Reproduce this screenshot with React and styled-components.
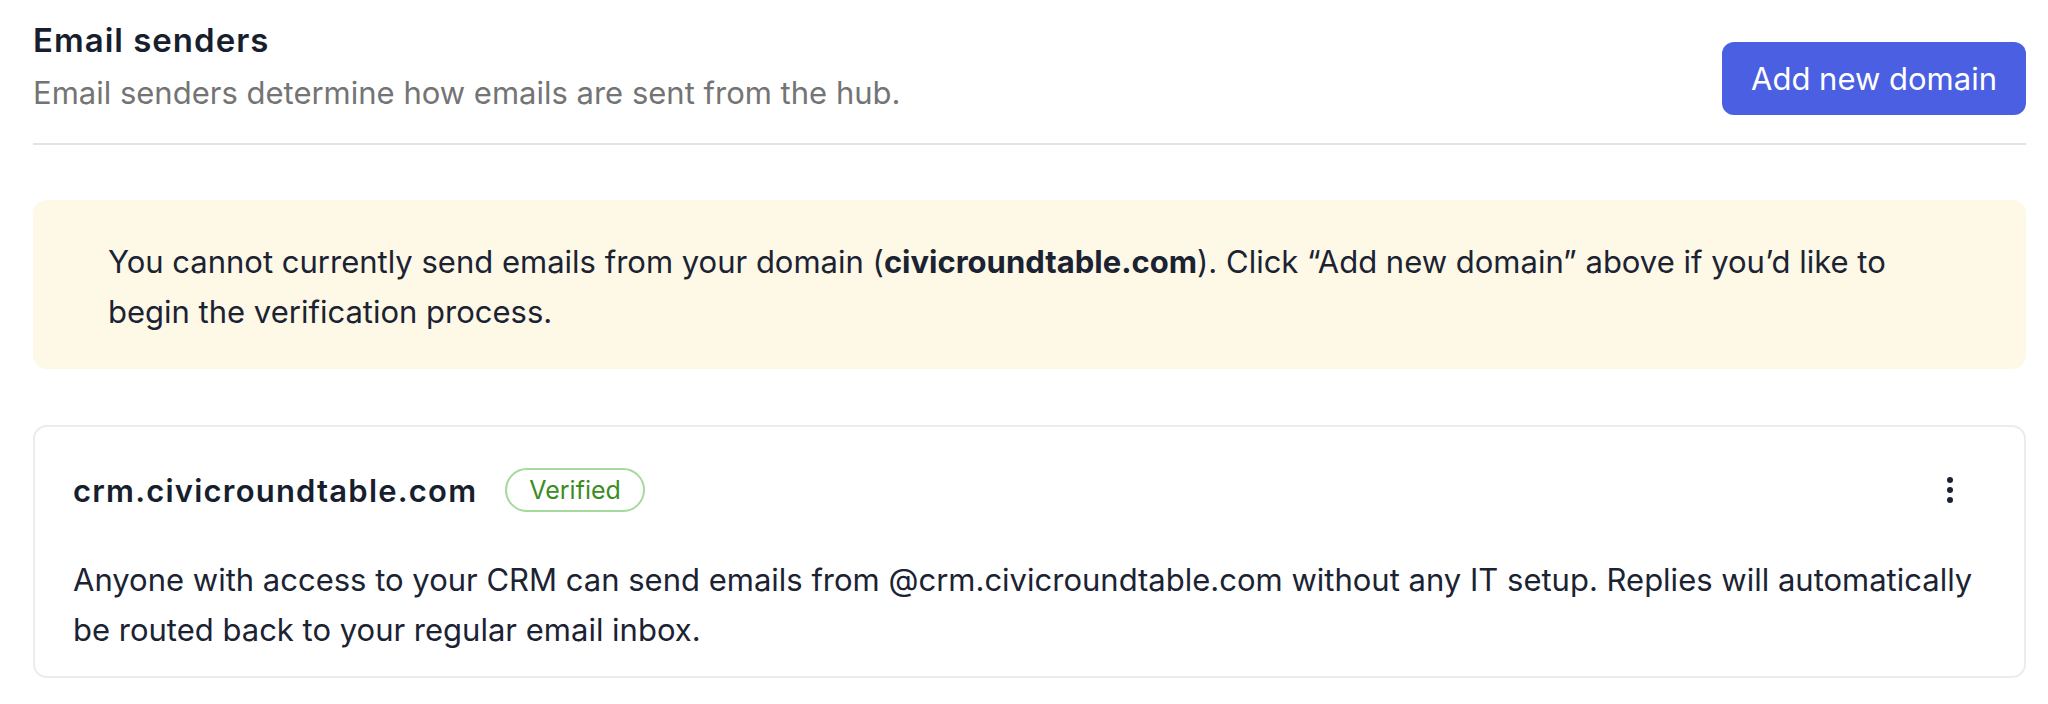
import React from 'react';
import styled, { createGlobalStyle } from 'styled-components';

const GlobalStyle = createGlobalStyle`
  body {
    margin: 0;
    background: #ffffff;
    font-family: Inter, "Noto Sans", "Liberation Sans", sans-serif;
    color: #1b2333;
  }
`;

const Page = styled.div`
  padding: 18px 22px 0 33px;
`;

const Header = styled.div`
  display: flex;
  align-items: flex-end;
  justify-content: space-between;
  padding-bottom: 28px;
  border-bottom: 2px solid #e3e3e3;
`;

const Title = styled.h2`
  margin: 0;
  font-size: 33px;
  line-height: 45px;
  font-weight: 600;
  letter-spacing: 1px;
  color: #171f2e;
`;

const Subtitle = styled.p`
  margin: 7px 0 0;
  font-size: 31px;
  line-height: 45px;
  color: #747474;
`;

const PrimaryButton = styled.button`
  height: 73px;
  padding: 0 29px;
  border: none;
  border-radius: 12px;
  background: #4a5fe2;
  color: #ffffff;
  font-family: inherit;
  font-size: 31px;
  cursor: pointer;
`;

const Notice = styled.div`
  margin-top: 55px;
  padding: 37px 75px 32px;
  border-radius: 14px;
  background: #fef8e6;
  font-size: 31px;
  line-height: 50px;
  color: #1b2333;

  strong {
    font-weight: 700;
  }
`;

const Card = styled.div`
  margin-top: 56px;
  padding: 41px 38px 21px;
  border: 2px solid #ececec;
  border-radius: 14px;
`;

const CardHead = styled.div`
  display: flex;
  align-items: center;
  gap: 28px;
`;

const Domain = styled.span`
  font-size: 31px;
  font-weight: 600;
  letter-spacing: 1.2px;
  color: #171f2e;
`;

const Badge = styled.span`
  display: inline-flex;
  align-items: center;
  height: 44px;
  padding: 0 22px;
  box-sizing: border-box;
  border: 2px solid ${p => p.$border};
  border-radius: 22px;
  color: ${p => p.$color};
  font-size: 25px;
`;

const MenuButton = styled.button`
  margin-left: auto;
  margin-right: 16px;
  width: 40px;
  height: 40px;
  display: flex;
  align-items: center;
  justify-content: center;
  border: none;
  background: transparent;
  padding: 0;
  cursor: pointer;
`;

const CardBody = styled.p`
  margin: 43px 0 0;
  font-size: 31px;
  line-height: 50px;
  color: #1b2333;
`;

function KebabIcon() {
  return (
    <svg width="10" height="28" viewBox="0 0 10 28">
      <circle cx="5" cy="4" r="3" fill="#1b2333" />
      <circle cx="5" cy="14" r="3" fill="#1b2333" />
      <circle cx="5" cy="24" r="3" fill="#1b2333" />
    </svg>
  );
}

export default function App() {
  return (
    <Page>
      <GlobalStyle />
      <Header>
        <div>
          <Title>Email senders</Title>
          <Subtitle>Email senders determine how emails are sent from the hub.</Subtitle>
        </div>
        <PrimaryButton>Add new domain</PrimaryButton>
      </Header>

      <Notice>
        You cannot currently send emails from your domain (<strong>civicroundtable.com</strong>). Click “Add new domain” above if you’d like to begin the verification process.
      </Notice>

      <Card>
        <CardHead>
          <Domain>crm.civicroundtable.com</Domain>
          <Badge $border="#a6da9c" $color="#3b8d22">Verified</Badge>
          <MenuButton aria-label="More options">
            <KebabIcon />
          </MenuButton>
        </CardHead>
        <CardBody>
          Anyone with access to your CRM can send emails from @crm.civicroundtable.com without any IT setup. Replies will automatically be routed back to your regular email inbox.
        </CardBody>
      </Card>
    </Page>
  );
}
